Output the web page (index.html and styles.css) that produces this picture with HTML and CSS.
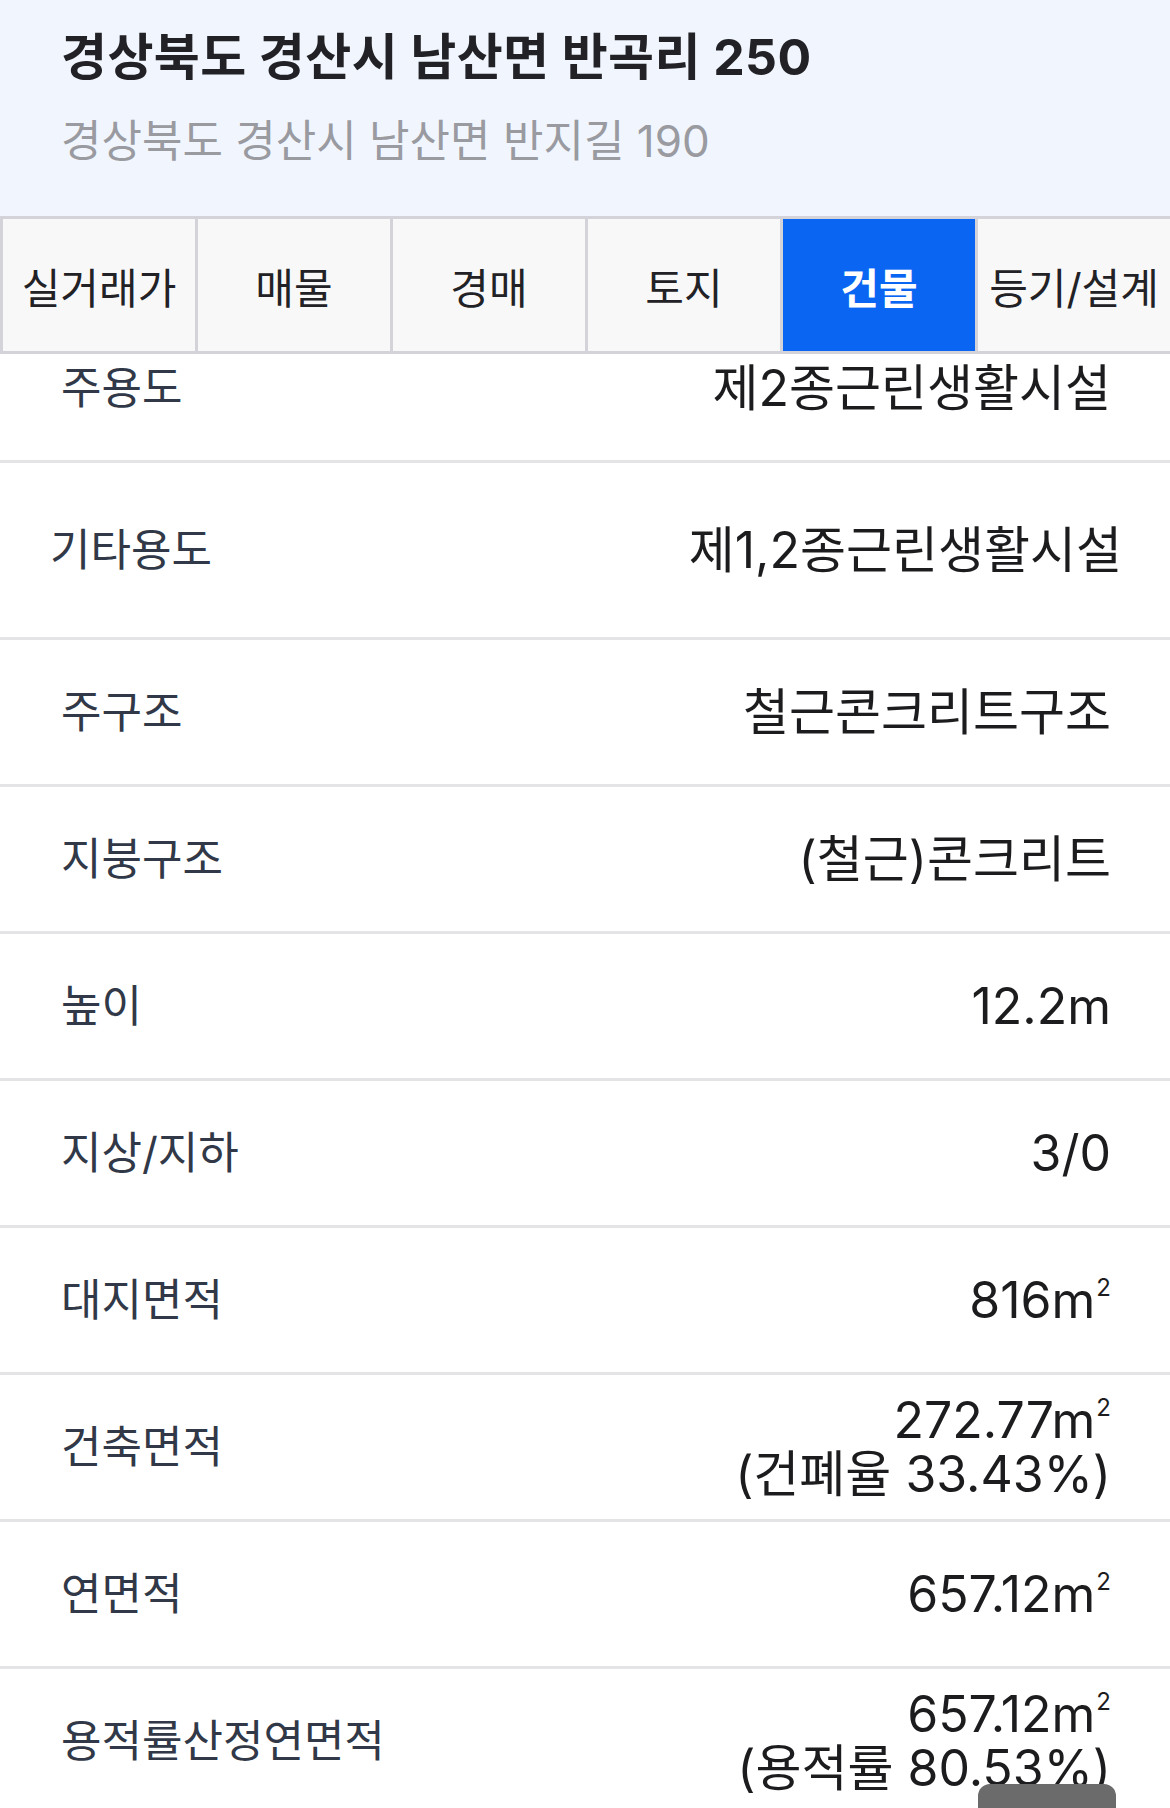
FILE: index.html
```html
<!DOCTYPE html>
<html lang="ko">
<head>
<meta charset="utf-8">
<title>건물 정보</title>
<link rel="stylesheet" href="styles.css">
</head>
<body>
<div class="page">
  <header class="header">
    <h1 class="title">경상북도 경산시 남산면 반곡리 250</h1>
    <p class="subtitle">경상북도 경산시 남산면 반지길 190</p>
  </header>
  <nav class="tabs">
    <div class="tab">실거래가</div>
    <div class="tab">매물</div>
    <div class="tab">경매</div>
    <div class="tab">토지</div>
    <div class="tab active">건물</div>
    <div class="tab">등기/설계</div>
  </nav>
  <main class="list">
    <div class="row first">
      <span class="label">주용도</span>
      <span class="value">제2종근린생활시설</span>
    </div>
    <div class="row wide">
      <span class="label">기타용도</span>
      <span class="value">제1,2종근린생활시설</span>
    </div>
    <div class="row">
      <span class="label">주구조</span>
      <span class="value">철근콘크리트구조</span>
    </div>
    <div class="row">
      <span class="label">지붕구조</span>
      <span class="value">(철근)콘크리트</span>
    </div>
    <div class="row">
      <span class="label">높이</span>
      <span class="value">12.2m</span>
    </div>
    <div class="row">
      <span class="label">지상/지하</span>
      <span class="value">3/0</span>
    </div>
    <div class="row">
      <span class="label">대지면적</span>
      <span class="value">816m<span class="sup">2</span></span>
    </div>
    <div class="row">
      <span class="label">건축면적</span>
      <span class="value"><span class="line">272.77m<span class="sup">2</span></span><span class="line">(건폐율 33.43%)</span></span>
    </div>
    <div class="row">
      <span class="label">연면적</span>
      <span class="value">657.12m<span class="sup">2</span></span>
    </div>
    <div class="row">
      <span class="label">용적률산정연면적</span>
      <span class="value"><span class="line">657.12m<span class="sup">2</span></span><span class="line">(용적률 80.53%)</span></span>
    </div>
  </main>
  <div class="float-btn"></div>
</div>
</body>
</html>
```

FILE: styles.css
```css
html, body {
  margin: 0;
  padding: 0;
  background: #ffffff;
}

.page {
  position: relative;
  width: 1170px;
  height: 1808px;
  overflow: hidden;
  font-family: "Inter", "Noto Sans CJK KR", sans-serif;
  color: #1c1c1e;
}

.header {
  height: 216px;
  box-sizing: border-box;
  background: #f1f6fe;
  padding: 27px 0 0 61px;
  display: flex;
  flex-direction: column;
  gap: 28px;
}

.title {
  margin: 0;
  font-size: 50px;
  line-height: 60px;
  font-weight: 700;
  color: #222226;
  letter-spacing: 0.4px;
}

.subtitle {
  margin: 0;
  font-size: 44px;
  line-height: 52px;
  font-weight: 400;
  color: #9a9aa1;
  letter-spacing: 0;
}

.tabs {
  display: grid;
  grid-template-columns: repeat(6, 1fr);
  gap: 3px;
  padding-left: 3px;
  background: #d3d3d9;
  border-top: 3px solid #d3d3d9;
  border-bottom: 3px solid #d3d3d9;
  position: relative;
  z-index: 2;
}

.tab {
  height: 132px;
  background: #f8f8f8;
  display: flex;
  align-items: center;
  justify-content: center;
  font-size: 42px;
  color: #222226;
  white-space: nowrap;
}

.tab.active {
  background: #0a66f2;
  color: #ffffff;
  font-weight: 700;
}

.list {
  overflow: hidden;
}

.row {
  height: 144px;
  border-bottom: 3px solid #e4e4e6;
  display: flex;
  align-items: center;
  justify-content: space-between;
  padding: 0 59px 0 61px;
}

.row.first {
  margin-top: -38px;
}

.row.wide {
  height: 174px;
  padding: 0 48px 0 50px;
}

.label {
  font-size: 44px;
  line-height: 52px;
  color: #313847;
  white-space: nowrap;
}

.value {
  display: block;
  font-size: 50px;
  line-height: 53px;
  text-align: right;
  color: #1c1c1e;
  white-space: nowrap;
}

.line {
  display: block;
  height: 54px;
  line-height: 54px;
}

.sup {
  font-size: 24px;
  line-height: 0;
  vertical-align: 22px;
  margin-left: 1px;
}

.float-btn {
  position: absolute;
  left: 978px;
  top: 1784px;
  width: 138px;
  height: 40px;
  background: #6b6b6b;
  border-radius: 12px 12px 0 0;
}
```
